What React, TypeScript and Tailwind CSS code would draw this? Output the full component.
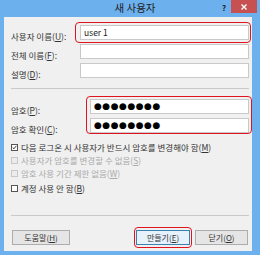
import React from "react";

const font = { fontFamily: '"Noto Sans CJK KR", "Noto Sans", sans-serif' };

function Label({ children }: { children: React.ReactNode }) {
  return <span className="text-[8.5px] leading-none text-[#333] whitespace-nowrap">{children}</span>;
}

function Input({ value, dots }: { value?: string; dots?: boolean }) {
  return (
    <div className="h-[15px] flex-1 bg-white border border-[#c9c9c9] flex items-center px-[3px]">
      {dots ? (
        <span className="text-[9px] leading-none tracking-[0.5px] text-black" style={{ fontFamily: '"DejaVu Sans", sans-serif' }}>●●●●●●●●</span>
      ) : (
        <span className="text-[8.5px] leading-none text-[#222]">{value}</span>
      )}
    </div>
  );
}

function Check({ checked, disabled, children }: { checked?: boolean; disabled?: boolean; children: React.ReactNode }) {
  return (
    <div className="h-[13px] flex items-center gap-[3px]">
      <div className={`w-[7px] h-[7px] border flex items-center justify-center ${disabled ? "border-[#c8c8c8] bg-[#ececec]" : "border-[#555] bg-white"}`}>
        {checked && (
          <svg width="7" height="7" viewBox="0 0 7 7"><path d="M1 3.5 L2.8 5.3 L6 1.2" stroke="#222" strokeWidth="1.2" fill="none" /></svg>
        )}
      </div>
      <span className={`text-[8.5px] leading-none whitespace-nowrap ${disabled ? "text-[#a9a9a9]" : "text-[#333]"}`}>{children}</span>
    </div>
  );
}

function Btn({ children, primary }: { children: React.ReactNode; primary?: boolean }) {
  return (
    <div className={`h-[15px] flex items-center justify-center border ${primary ? "border-[#3c7fb1] bg-[#e5f1fb]" : "border-[#adadad] bg-[#e5e5e5]"}`}>
      <span className="text-[8px] leading-none text-[#333]">{children}</span>
    </div>
  );
}

export default function App() {
  return (
    <div className="w-[260px] h-[255px] bg-[#6cb0ee] flex flex-col overflow-hidden" style={font}>
      <div className="h-[17px] relative flex items-center justify-center">
        <span className="text-[10.5px] leading-none text-[#222] pl-[10px]">새 사용자</span>
        <span className="absolute left-[222px] top-[2px] text-[8px] font-bold text-[#222]">?</span>
        <div className="absolute left-[231px] top-0 w-[26px] h-[13px] bg-[#c75050] flex items-center justify-center">
          <svg width="6" height="6" viewBox="0 0 6 6"><path d="M0.5 0.5 L5.5 5.5 M5.5 0.5 L0.5 5.5" stroke="white" strokeWidth="1.4" /></svg>
        </div>
      </div>
      <div className="ml-[4px] mr-[8px] h-[234px] bg-[#f0f0f0] flex flex-col pl-[7px] pr-[3px] pt-[8px]">
        <div className="relative">
          <div className="absolute left-[64px] top-[-3px] w-[176px] h-[21px] border-[1.5px] border-[#e0141e] rounded-[4px]" />
          <div className="flex items-center h-[15px]">
            <div className="w-[69px]"><Label>사용자 이름(<u>U</u>):</Label></div>
            <Input value="user 1" />
          </div>
        </div>
        <div className="flex items-center h-[15px] mt-[4px]">
          <div className="w-[69px]"><Label>전체 이름(<u>F</u>):</Label></div>
          <Input />
        </div>
        <div className="flex items-center h-[15px] mt-[4px]">
          <div className="w-[69px]"><Label>설명(<u>D</u>):</Label></div>
          <Input />
        </div>
        <div className="h-px bg-[#c9c9c9] mt-[10px]" />
        <div className="relative mt-[10px]">
          <div className="absolute left-[75px] top-[-3px] w-[166px] h-[38px] border-[1.5px] border-[#e0141e] rounded-[4px]" />
          <div className="flex items-center h-[15px]">
            <div className="w-[79px]"><Label>암호(<u>P</u>):</Label></div>
            <Input dots />
          </div>
          <div className="flex items-center h-[15px] mt-[4px]">
            <div className="w-[79px]"><Label>암호 확인(<u>C</u>):</Label></div>
            <Input dots />
          </div>
        </div>
        <div className="flex flex-col mt-[8px]">
          <Check checked>다음 로그온 시 사용자가 반드시 암호를 변경해야 함(<u>M</u>)</Check>
          <Check disabled>사용자가 암호를 변경할 수 없음(<u>S</u>)</Check>
          <Check disabled>암호 사용 기간 제한 없음(<u>W</u>)</Check>
          <div className="mt-[2px]"><Check>계정 사용 안 함(<u>B</u>)</Check></div>
        </div>
        <div className="h-px bg-[#c9c9c9] mt-[20px]" />
        <div className="flex items-center mt-[14px] pl-[1px] pr-[1px]">
          <div className="w-[58px]"><Btn>도움말(<u>H</u>)</Btn></div>
          <div className="flex-1" />
          <div className="relative w-[54px]">
            <div className="absolute left-[-2px] top-[-3px] w-[58px] h-[21px] border-[1.5px] border-[#e0141e] rounded-[4px]" />
            <Btn primary>만들기(<u>E</u>)</Btn>
          </div>
          <div className="w-[53px] ml-[5px]"><Btn>닫기(<u>O</u>)</Btn></div>
        </div>
      </div>
    </div>
  );
}
